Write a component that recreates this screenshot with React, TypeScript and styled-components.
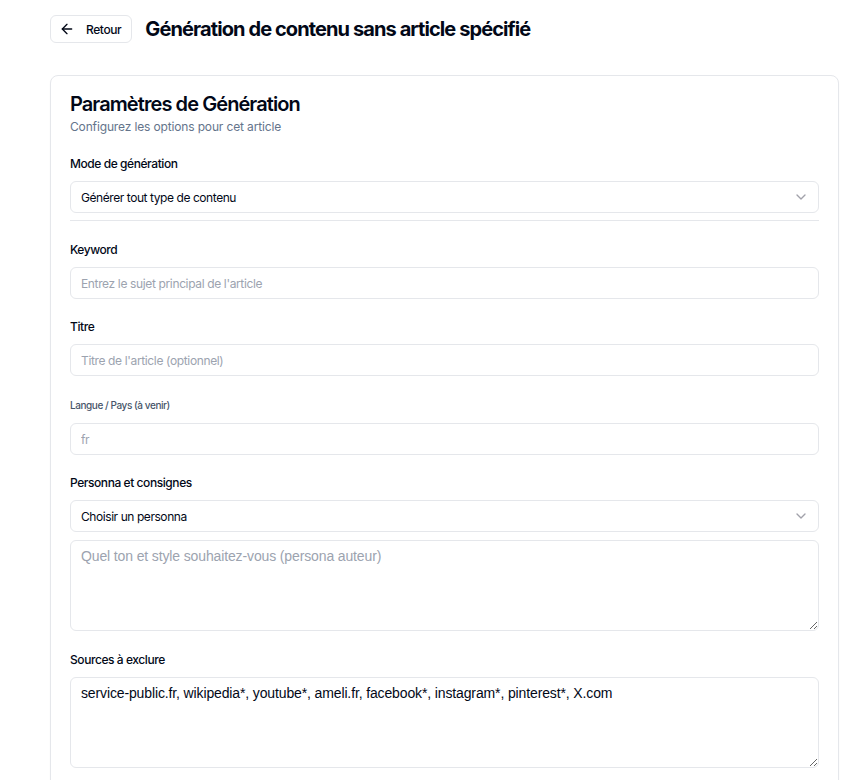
import React from 'react'
import styled, { createGlobalStyle } from 'styled-components'
import { ArrowLeft, ChevronDown } from 'lucide-react'

const GlobalStyle = createGlobalStyle`
  * {
    box-sizing: border-box;
  }
  body {
    margin: 0;
    background-color: #fff;
    font-family: Inter, 'Noto Sans', sans-serif;
    letter-spacing: -0.027em;
    color: #020817;
  }
`

const Page = styled.div`
  padding: 15px 28px 0 50px;
`

const Header = styled.div`
  display: flex;
  align-items: center;
  gap: 13px;
  margin-bottom: 32px;
`

const BackButton = styled.button`
  display: flex;
  align-items: center;
  gap: 11px;
  height: 28px;
  padding: 0 10px 0 8px;
  background-color: #fff;
  border: 1px solid #e5e7eb;
  border-radius: 6px;
  font-family: Inter, sans-serif;
  font-size: 12px;
  font-weight: 500;
  letter-spacing: -0.033em;
  color: #020817;
  cursor: pointer;
`

const PageTitle = styled.h1`
  margin: 0;
  font-size: 20px;
  line-height: 28px;
  font-weight: 700;
  letter-spacing: -0.045em;
  color: #020817;
`

const Card = styled.div`
  border: 1px solid #e5e7eb;
  border-radius: 8px;
  padding: 14px 19px 20px;
  background-color: #fff;
  box-shadow: 0 1px 2px rgba(0, 0, 0, 0.03);
`

const CardTitle = styled.h2`
  margin: 0;
  font-size: 20px;
  line-height: 28px;
  font-weight: 600;
  letter-spacing: -0.046em;
  color: #020817;
`

const CardDescription = styled.p`
  margin: 1px 0 0;
  font-size: 12px;
  line-height: 16px;
  letter-spacing: -0.012em;
  color: #64748b;
`

const Form = styled.div`
  display: flex;
  flex-direction: column;
  margin-top: 21px;
`

const Field = styled.div<{ $top?: number }>`
  display: flex;
  flex-direction: column;
  margin-top: ${({ $top }) => $top ?? 0}px;
`

const Label = styled.label<{ $small?: boolean }>`
  font-size: ${({ $small }) => ($small ? '10px' : '12px')};
  line-height: ${({ $small }) => ($small ? '18px' : '16px')};
  font-weight: 500;
  color: ${({ $small }) => ($small ? '#475569' : '#020817')};
  margin-bottom: 9px;
`

const SelectBox = styled.div`
  display: flex;
  align-items: center;
  justify-content: space-between;
  height: 32px;
  padding: 0 9px 0 10px;
  border: 1px solid #e5e7eb;
  border-radius: 6px;
  font-size: 12px;
  color: #020817;
  background-color: #fff;

  svg {
    color: #a1a1aa;
  }
`

const Divider = styled.div`
  height: 1px;
  margin-top: 7px;
  background-color: #e5e7eb;
`

const TextInput = styled.input`
  width: 100%;
  height: 32px;
  padding: 0 10px;
  border: 1px solid #e5e7eb;
  border-radius: 6px;
  font-family: Inter, sans-serif;
  font-size: 12px;
  letter-spacing: -0.03em;
  color: #020817;
  background-color: #fff;
  outline: none;

  &::placeholder {
    color: #9ca3af;
  }

  &:disabled {
    color: #9ca3af;
    background-color: #fff;
  }
`

const TextArea = styled.textarea<{ $top?: number }>`
  display: block;
  width: 100%;
  height: 91px;
  margin-top: ${({ $top }) => $top ?? 0}px;
  padding: 7px 10px;
  border: 1px solid #e5e7eb;
  border-radius: 6px;
  font-family: 'Liberation Sans', Arial, sans-serif;
  font-size: 14px;
  line-height: 16px;
  letter-spacing: -0.13px;
  color: #020817;
  background-color: #fff;
  resize: vertical;
  outline: none;

  &::placeholder {
    color: #9ca3af;
  }
`

const Select = ({ value }: { value: string }) => (
  <SelectBox>
    <span>{value}</span>
    <ChevronDown size={16} strokeWidth={2} />
  </SelectBox>
)

export default function App() {
  return (
    <>
      <GlobalStyle />
      <Page>
        <Header>
          <BackButton>
            <ArrowLeft size={16} strokeWidth={2} />
            Retour
          </BackButton>
          <PageTitle>Génération de contenu sans article spécifié</PageTitle>
        </Header>
        <Card>
          <CardTitle>Paramètres de Génération</CardTitle>
          <CardDescription>Configurez les options pour cet article</CardDescription>
          <Form>
            <Field>
              <Label>Mode de génération</Label>
              <Select value="Générer tout type de contenu" />
            </Field>
            <Divider />
            <Field $top={21}>
              <Label>Keyword</Label>
              <TextInput placeholder="Entrez le sujet principal de l'article" />
            </Field>
            <Field $top={20}>
              <Label>Titre</Label>
              <TextInput placeholder="Titre de l'article (optionnel)" />
            </Field>
            <Field $top={20}>
              <Label $small>Langue / Pays (à venir)</Label>
              <TextInput value="fr" disabled readOnly />
            </Field>
            <Field $top={20}>
              <Label>Personna et consignes</Label>
              <Select value="Choisir un personna" />
              <TextArea $top={8} placeholder="Quel ton et style souhaitez-vous (persona auteur)" />
            </Field>
            <Field $top={21}>
              <Label>Sources à exclure</Label>
              <TextArea defaultValue="service-public.fr, wikipedia*, youtube*, ameli.fr, facebook*, instagram*, pinterest*, X.com" />
            </Field>
          </Form>
        </Card>
      </Page>
    </>
  )
}
